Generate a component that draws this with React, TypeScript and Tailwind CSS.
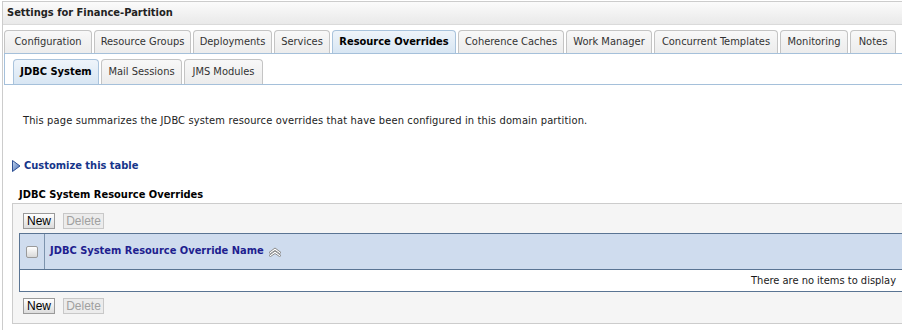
import React from "react";

const tabs = [
  { label: "Configuration", w: "w-[88px]" },
  { label: "Resource Groups", w: "w-[97px]" },
  { label: "Deployments", w: "w-[79px]" },
  { label: "Services", w: "w-[56px]" },
  { label: "Resource Overrides", w: "w-[124px]", active: true },
  { label: "Coherence Caches", w: "w-[106px]" },
  { label: "Work Manager", w: "w-[86px]" },
  { label: "Concurrent Templates", w: "w-[124px]" },
  { label: "Monitoring", w: "w-[68px]" },
  { label: "Notes", w: "w-[46px]" },
];

const subTabs = [
  { label: "JDBC System", w: "w-[86px]", active: true },
  { label: "Mail Sessions", w: "w-[81px]" },
  { label: "JMS Modules", w: "w-[79px]" },
];

function Tab({ label, w, active }: { label: string; w: string; active?: boolean }) {
  return (
    <div
      className={`${w} h-[23px] shrink-0 flex items-center justify-center rounded-t-[4px] border border-b-0 ${
        active
          ? "border-[#a9c3dc] bg-gradient-to-b from-[#eef4fa] to-[#d8e6f3] font-bold text-black"
          : "border-[#c4c4c4] bg-gradient-to-b from-[#f8f8f8] to-[#ececec] text-[#333]"
      }`}
    >
      {label}
    </div>
  );
}

function SubTab({ label, w, active }: { label: string; w: string; active?: boolean }) {
  return (
    <div
      className={`${w} h-[25px] shrink-0 flex items-center justify-center rounded-t-[4px] border border-b-0 ${
        active
          ? "border-[#a9c3dc] bg-gradient-to-b from-[#eef4fa] to-[#d8e6f3] font-bold text-black"
          : "border-[#c4c4c4] bg-gradient-to-b from-[#f8f8f8] to-[#ececec] text-[#333]"
      }`}
    >
      {label}
    </div>
  );
}

function Btn({ label, disabled, w }: { label: string; disabled?: boolean; w: string }) {
  return (
    <div
      className={`${w} h-[16px] flex items-center justify-center border font-['Liberation_Sans',Arial,sans-serif] text-[12px] ${
        disabled
          ? "border-[#c8c8c8] bg-[#ececec] text-[#a0a0a0]"
          : "border-[#9a9a9a] bg-gradient-to-b from-[#ffffff] to-[#dcdcdc] text-black"
      }`}
    >
      {label}
    </div>
  );
}

function ButtonRow() {
  return (
    <div className="flex gap-[8px]">
      <Btn label="New" w="w-[32px]" />
      <Btn label="Delete" w="w-[41px]" disabled />
    </div>
  );
}

export default function App() {
  return (
    <div className="w-[902px] h-[330px] overflow-hidden bg-white pt-[1px] font-['DejaVu_Sans_Condensed','DejaVu_Sans',sans-serif] text-[11px] text-[#1a1a1a]">
      <div className="ml-[2px] h-full border-l border-t border-[#cccccc]">
        {/* title */}
        <div className="h-[23px] flex items-center pl-[4px] pt-[1px] font-bold text-[#222] bg-gradient-to-b from-[#fbfbfb] to-[#e9e9e9] border-b border-[#dadada]">
          Settings for Finance-Partition
        </div>

        {/* main tabs */}
        <div className="mt-[5px] pl-[1px] flex gap-[2px] items-end">
          {tabs.map((t) => (
            <Tab key={t.label} {...t} />
          ))}
        </div>

        {/* sub tabs */}
        <div className="ml-[1px] h-[32px] border-t border-l border-b border-[#a5c0da] pl-[8px] pt-[5px] flex gap-[2px] items-end">
          {subTabs.map((t) => (
            <SubTab key={t.label} {...t} />
          ))}
        </div>

        <p className="mt-[29px] ml-[20px] leading-[14px] tracking-[0.15px] text-[#222]">
          This page summarizes the JDBC system resource overrides that have been configured in this domain partition.
        </p>

        <div className="mt-[31px] ml-[9px] flex items-center gap-[3px] leading-[14px]">
          <svg width="9" height="12" viewBox="0 0 9 12">
            <defs>
              <linearGradient id="tri" x1="0" y1="0" x2="1" y2="1">
                <stop offset="0" stopColor="#c9dbf2" />
                <stop offset="1" stopColor="#3f66b0" />
              </linearGradient>
            </defs>
            <polygon points="0.5,0.5 8,6 0.5,11.5" fill="url(#tri)" stroke="#2d4f93" strokeWidth="1" />
          </svg>
          <span className="font-bold text-[#16358a]">Customize this table</span>
        </div>

        <div className="mt-[15px] ml-[16px] leading-[14px] font-bold text-black">
          JDBC System Resource Overrides
        </div>

        {/* table box */}
        <div className="mt-[1px] ml-[9px] w-[910px] border border-[#cccccc] bg-[#f5f5f5] pt-[9px] pb-[9px] pl-[10px]">
          <ButtonRow />
          <div className="mt-[4px] -ml-[4px] w-[884px] border border-[#5a7493] bg-white">
            <div className="h-[36px] flex bg-[#cfdcee] border-b border-[#5a7493]">
              <div className="w-[25px] shrink-0 border-r border-[#7d93ad] flex items-center justify-center">
                <div className="w-[12px] h-[12px] rounded-[2px] border border-[#9a9a9a] bg-gradient-to-b from-[#ffffff] to-[#d9d9d9]" />
              </div>
              <div className="flex items-center pl-[5px] gap-[4px] font-bold text-[#1e1e8f]">
                JDBC System Resource Override Name
                <svg width="14" height="10" viewBox="0 0 14 10" fill="none" stroke="#8a8a8a" strokeWidth="1">
                  <path d="M1 5.5 L7 1 L13 5.5 L11.5 6.5 L7 3.5 L2.5 6.5 Z" fill="#ffffff" />
                  <path d="M1 8.5 L7 4 L13 8.5 L11.5 9.5 L7 6.5 L2.5 9.5 Z" fill="#ffffff" />
                </svg>
              </div>
            </div>
            <div className="h-[21px] flex items-center justify-end pr-[6px] pt-[1px] text-[#1a1a1a]">
              There are no items to display
            </div>
          </div>
          <div className="mt-[6px]">
            <ButtonRow />
          </div>
        </div>
      </div>
    </div>
  );
}
